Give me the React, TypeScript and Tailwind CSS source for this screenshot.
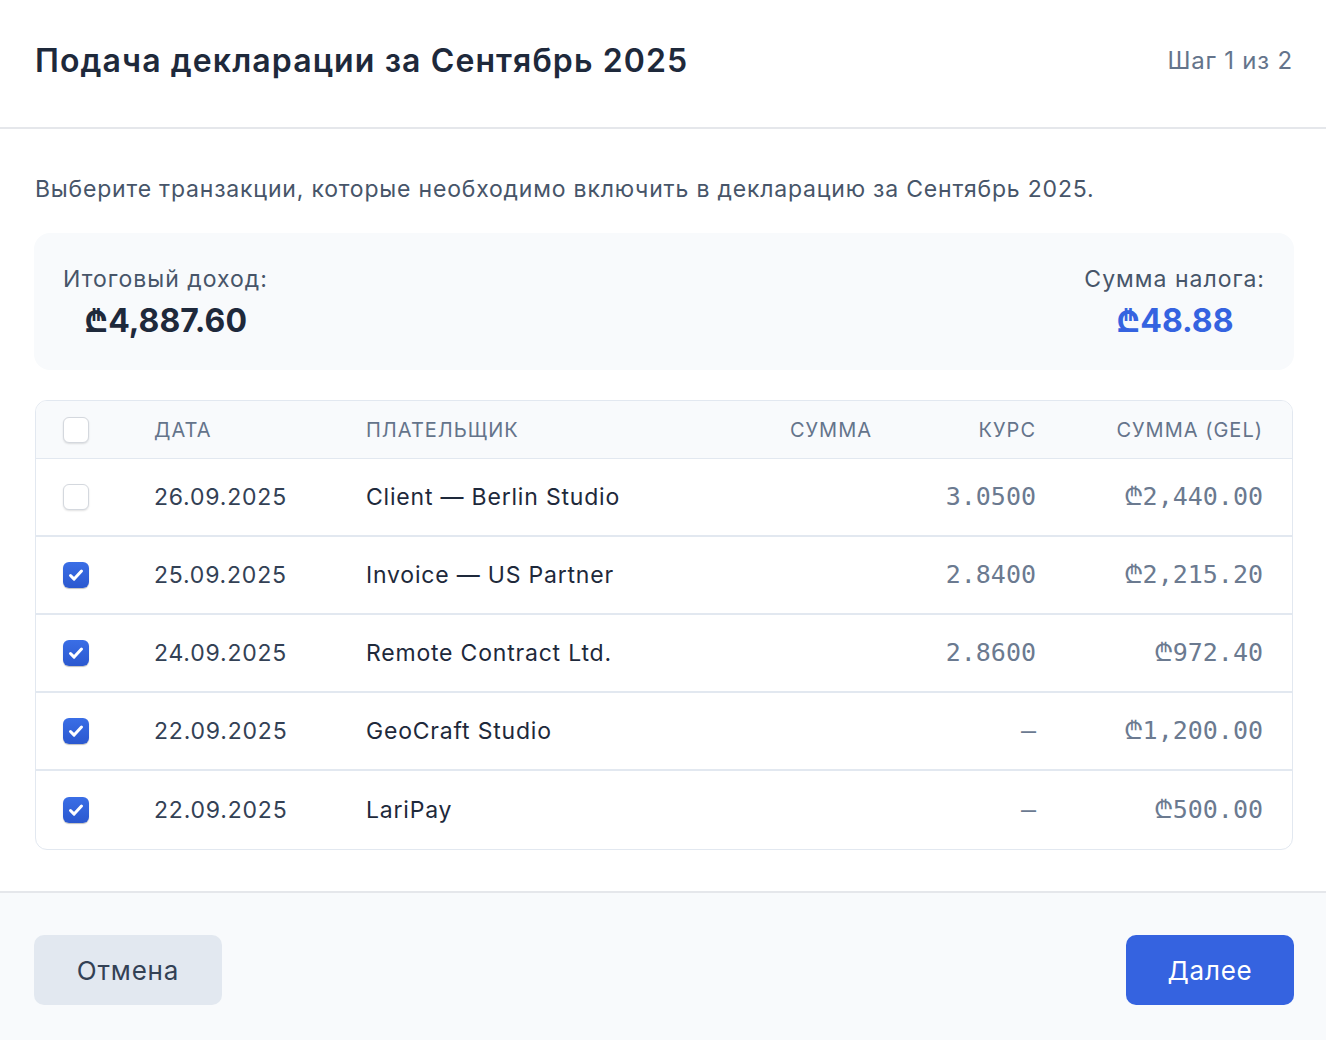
import React, { useState } from 'react';

type Tx = {
  id: number;
  date: string;
  payer: string;
  amount: string;
  rate: string;
  gel: string;
  checked: boolean;
};

const initialTx: Tx[] = [
  { id: 1, date: '26.09.2025', payer: 'Client — Berlin Studio', amount: '', rate: '3.0500', gel: '₾2,440.00', checked: false },
  { id: 2, date: '25.09.2025', payer: 'Invoice — US Partner', amount: '', rate: '2.8400', gel: '₾2,215.20', checked: true },
  { id: 3, date: '24.09.2025', payer: 'Remote Contract Ltd.', amount: '', rate: '2.8600', gel: '₾972.40', checked: true },
  { id: 4, date: '22.09.2025', payer: 'GeoCraft Studio', amount: '', rate: '–', gel: '₾1,200.00', checked: true },
  { id: 5, date: '22.09.2025', payer: 'LariPay', amount: '', rate: '–', gel: '₾500.00', checked: true },
];

function Checkbox({ checked, onClick }: { checked: boolean; onClick?: () => void }) {
  if (checked) {
    return (
      <button
        onClick={onClick}
        className="w-[26px] h-[26px] rounded-[6px] bg-gradient-to-b from-[#3a6ee6] to-[#2b58cf] flex items-center justify-center shadow-[0_1px_1px_rgba(0,0,0,0.25)]"
      >
        <svg width="20" height="20" viewBox="0 0 20 20" fill="none">
          <path d="M4.5 10.5l3.6 3.6L15.5 6" stroke="white" strokeWidth="3" strokeLinecap="round" strokeLinejoin="round" />
        </svg>
      </button>
    );
  }
  return (
    <button
      onClick={onClick}
      className="w-[26px] h-[26px] rounded-[6px] bg-white border border-[#d4d8de] shadow-[0_1px_2px_rgba(0,0,0,0.12)]"
    />
  );
}

export default function App() {
  const [rows, setRows] = useState<Tx[]>(initialTx);

  const toggle = (id: number) => {
    setRows(rows.map((r) => (r.id === id ? { ...r, checked: !r.checked } : r)));
  };

  const allChecked = rows.every((r) => r.checked);
  const mono = "text-right font-['DejaVu_Sans_Mono','Liberation_Mono',monospace] text-[25px] text-[#6b7a90]";

  return (
    <div className="h-[1040px] overflow-hidden bg-white flex flex-col font-['Inter','Noto_Sans',sans-serif]">
      {/* Header */}
      <div className="h-[129px] pl-[35px] pr-[33px] pb-[6px] flex items-center justify-between border-b-2 border-[#e5e7eb]">
        <h1 className="text-[32px] font-semibold text-[#1e293b] tracking-[1.1px]">
          Подача декларации за Сентябрь 2025
        </h1>
        <span className="text-[24px] text-[#64748b] tracking-[0.8px]">Шаг 1 из 2</span>
      </div>

      {/* Body */}
      <div className="pl-[34px] pr-[32px] pt-[42px] pb-[41px]">
        <p className="pl-[1px] text-[23px] leading-[36px] text-[#475569] tracking-[0.8px]">
          Выберите транзакции, которые необходимо включить в декларацию за Сентябрь 2025.
        </p>

        <div className="mt-[26px] h-[137px] bg-[#f8fafc] rounded-[16px] px-[29px] pt-[28px] flex justify-between">
          <div className="flex flex-col items-center">
            <span className="text-[23px] leading-[36px] text-[#475569] tracking-[1px]">Итоговый доход:</span>
            <span className="mt-[4px] text-[32px] leading-[40px] font-bold text-[#1e293b]">₾4,887.60</span>
          </div>
          <div className="flex flex-col items-center">
            <span className="text-[23px] leading-[36px] text-[#475569] tracking-[1px]">Сумма налога:</span>
            <span className="mt-[4px] text-[32px] leading-[40px] font-bold text-[#3563e0]">₾48.88</span>
          </div>
        </div>

        <div className="mt-[30px] ml-[1px] mr-[1px] border border-[#e2e8f0] rounded-[12px] overflow-hidden">
          <div className="grid grid-cols-[118px_212px_1fr_200px_164px_227px] pr-[29px] h-[58px] items-center bg-[#f8fafc] border-b border-[#e2e8f0] text-[20px] uppercase tracking-[1px] text-[#64748b]">
            <div className="pl-[27px] flex items-center">
              <Checkbox checked={allChecked} onClick={() => setRows(rows.map((r) => ({ ...r, checked: !allChecked })))} />
            </div>
            <div>Дата</div>
            <div>Плательщик</div>
            <div className="text-right">Сумма</div>
            <div className="text-right">Курс</div>
            <div className="text-right">Сумма (GEL)</div>
          </div>
          {rows.map((r, i) => (
            <div
              key={r.id}
              className={
                'grid grid-cols-[118px_212px_1fr_200px_164px_227px] pr-[29px] h-[78px] items-center ' +
                (i < rows.length - 1 ? 'border-b-2 border-[#e2e8f0]' : '')
              }
            >
              <div className="pl-[27px] flex items-center">
                <Checkbox checked={r.checked} onClick={() => toggle(r.id)} />
              </div>
              <div className="text-[23px] text-[#334155] tracking-[0.8px]">{r.date}</div>
              <div className="text-[23px] text-[#1e293b] tracking-[0.8px]">{r.payer}</div>
              <div className={mono}>{r.amount}</div>
              <div className={mono}>{r.rate}</div>
              <div className={mono}>{r.gel}</div>
            </div>
          ))}
        </div>
      </div>

      {/* Footer */}
      <div className="flex-1 bg-[#f8fafc] border-t-2 border-[#e5e7eb] pl-[34px] pr-[32px] pt-[42px] flex justify-between items-start">
        <button className="w-[188px] h-[70px] rounded-[10px] bg-[#e2e8f0] text-[26px] text-[#334155] tracking-[0.8px]">Отмена</button>
        <button className="w-[168px] h-[70px] rounded-[10px] bg-[#3563e0] text-[26px] text-white tracking-[0.8px]">Далее</button>
      </div>
    </div>
  );
}
